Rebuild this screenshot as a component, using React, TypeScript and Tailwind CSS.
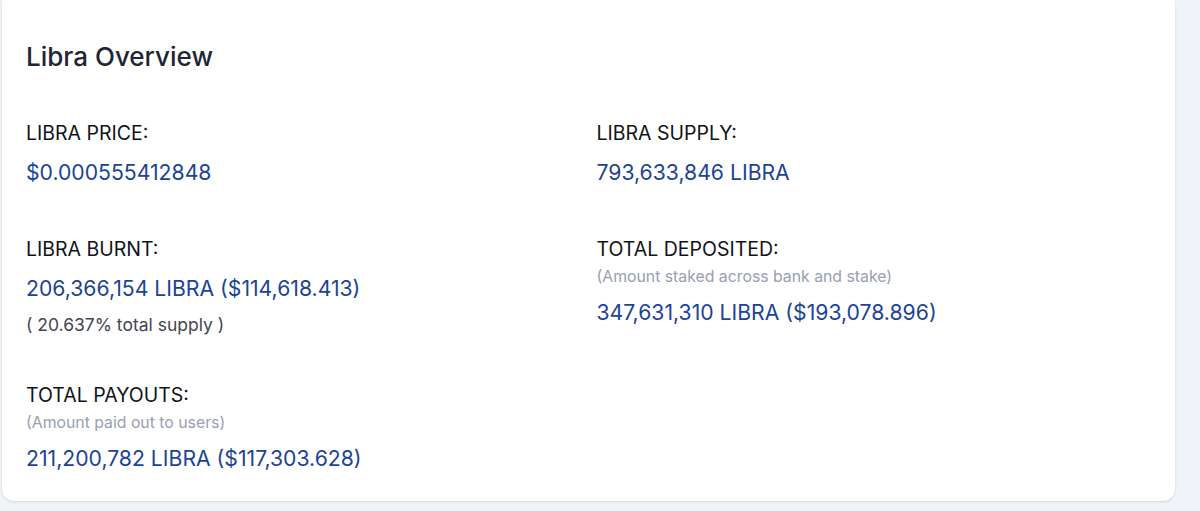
const font = { fontFamily: 'Inter, "Noto Sans", sans-serif' }

type Stat = {
  label: string
  note?: string
  value: string
  extra?: string
}

const stats: Stat[] = [
  { label: 'LIBRA PRICE:', value: '$0.000555412848' },
  { label: 'LIBRA SUPPLY:', value: '793,633,846 LIBRA' },
  {
    label: 'LIBRA BURNT:',
    value: '206,366,154 LIBRA ($114,618.413)',
    extra: '( 20.637% total supply )',
  },
  {
    label: 'TOTAL DEPOSITED:',
    note: '(Amount staked across bank and stake)',
    value: '347,631,310 LIBRA ($193,078.896)',
  },
  {
    label: 'TOTAL PAYOUTS:',
    note: '(Amount paid out to users)',
    value: '211,200,782 LIBRA ($117,303.628)',
  },
]

function StatItem({ stat }: { stat: Stat }) {
  return (
    <div className="flex flex-col">
      <p className="text-[19.5px] leading-[28px] text-[#111318]">{stat.label}</p>
      {stat.note && (
        <p className="mt-[4px] text-[15.8px] leading-[20px] text-[#97a0b3]">{stat.note}</p>
      )}
      <p className="mb-1 mt-[10px] text-[21.2px] leading-[30px] text-[#1c4496]">{stat.value}</p>
      {stat.extra && (
        <p className="mt-[6px] text-[17.5px] leading-[24px] text-[#3f4653]">{stat.extra}</p>
      )}
    </div>
  )
}

export default function App() {
  return (
    <div className="min-h-[511px] bg-[#f0f3f7] pb-[10px] pl-[2px] pr-[25px]" style={font}>
      <div className="rounded-b-xl bg-white px-6 pb-6 pt-[41px] shadow-sm">
        <h2 className="text-[26px] font-medium leading-[32px] text-[#1f2635]">Libra Overview</h2>
        <div className="mt-[46px] grid grid-cols-2 gap-x-4 gap-y-[44px]">
          {stats.map((stat) => (
            <StatItem key={stat.label} stat={stat} />
          ))}
        </div>
      </div>
    </div>
  )
}
